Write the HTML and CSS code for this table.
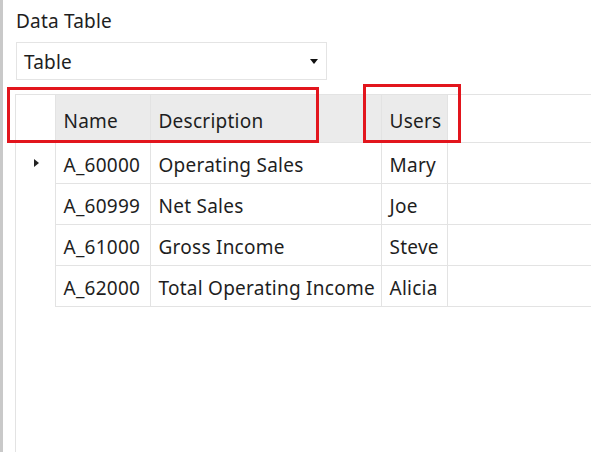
FILE: index.html
```html
<!DOCTYPE html>
<html>
<head>
<meta charset="utf-8">
<link rel="stylesheet" href="styles.css">
</head>
<body>
<div class="page">
  <div class="edge"></div>
  <div class="panel">
    <div class="label">Data Table</div>
    <div class="select">
      <span class="select-text">Table</span>
      <svg class="caret" width="8" height="5" viewBox="0 0 8 5"><path d="M0 0H8L4 5Z" fill="#111"/></svg>
    </div>
    <div class="grid">
      <table class="table">
        <colgroup>
          <col class="c-rh"><col class="c-name"><col class="c-desc"><col class="c-users"><col>
        </colgroup>
        <thead>
          <tr>
            <th class="rh"></th>
            <th class="hc">Name</th>
            <th class="hc">Description</th>
            <th class="hc">Users</th>
            <th class="fill"></th>
          </tr>
        </thead>
        <tbody>
          <tr>
            <td class="rh"><svg width="5" height="8" viewBox="0 0 5 8"><path d="M0 0L5 4L0 8Z" fill="#222"/></svg></td>
            <td>A_60000</td><td>Operating Sales</td><td>Mary</td><td class="fill"></td>
          </tr>
          <tr>
            <td class="rh"></td>
            <td>A_60999</td><td>Net Sales</td><td>Joe</td><td class="fill"></td>
          </tr>
          <tr>
            <td class="rh"></td>
            <td>A_61000</td><td>Gross Income</td><td>Steve</td><td class="fill"></td>
          </tr>
          <tr>
            <td class="rh"></td>
            <td>A_62000</td><td>Total Operating Income</td><td>Alicia</td><td class="fill"></td>
          </tr>
        </tbody>
      </table>
    </div>
  </div>
  <div class="mark mark-a"></div>
  <div class="mark mark-b"></div>
</div>
</body>
</html>
```

FILE: styles.css
```css
* { box-sizing: border-box; }
html, body { margin: 0; padding: 0; background: #fff; }
body {
  font-family: "Noto Sans", "Open Sans", sans-serif;
  color: #1e1e1e;
  width: 591px;
  height: 452px;
  overflow: hidden;
  letter-spacing: 0.2px;
}
.page {
  position: relative;
  display: flex;
  height: 452px;
}
.edge {
  width: 3px;
  background: #c9c9c9;
  flex: none;
}
.panel {
  flex: 1;
  display: flex;
  flex-direction: column;
  padding: 11px 0 0 12px;
  min-width: 0;
}
.label {
  font-size: 19px;
  line-height: 20px;
  padding-left: 1px;
}
.select {
  margin: 11px 0 0 1px;
  width: 311px;
  height: 38px;
  border: 1px solid #e4e4e4;
  display: flex;
  align-items: center;
  justify-content: space-between;
  padding: 2px 8px 0 7px;
  font-size: 19px;
}
.caret { display: block; margin-top: -1px; }
.grid {
  margin-top: 14px;
  flex: 1;
  border-left: 1px solid #e3e3e3;
}
.table {
  width: 100%;
  table-layout: fixed;
  border-collapse: collapse;
  font-size: 19px;
  letter-spacing: 0.25px;
}
.c-rh { width: 39px; }
.c-name { width: 95px; }
.c-desc { width: 231px; }
.c-users { width: 66px; }
.table th, .table td {
  text-align: left;
  font-weight: normal;
  padding: 0 0 0 8px;
  white-space: nowrap;
  overflow: hidden;
  border: 1px solid #e3e3e3;
}
.table thead th {
  height: 48px;
  padding-top: 4px;
  border-top: 1px solid #e3e3e3;
}
.table thead th.hc { background: #ebebeb; }
.table tbody td { height: 41px; padding-top: 3px; }
.table td.rh, .table th.rh {
  border-left: none;
  border-top: none;
  border-bottom: none;
  padding: 0;
}
.table th.rh { border-top: 1px solid #e3e3e3; }
.table td.rh svg { display: block; margin: 0 0 0 18px; }
.table .fill { border-right: none; }
.table thead th.fill { border-left: 1px solid #e3e3e3; }
.mark {
  position: absolute;
  border: 3px solid #e2151d;
}
.mark-a { left: 7px; top: 87px; width: 312px; height: 56px; }
.mark-b { left: 363px; top: 84px; width: 98px; height: 59px; }
```
